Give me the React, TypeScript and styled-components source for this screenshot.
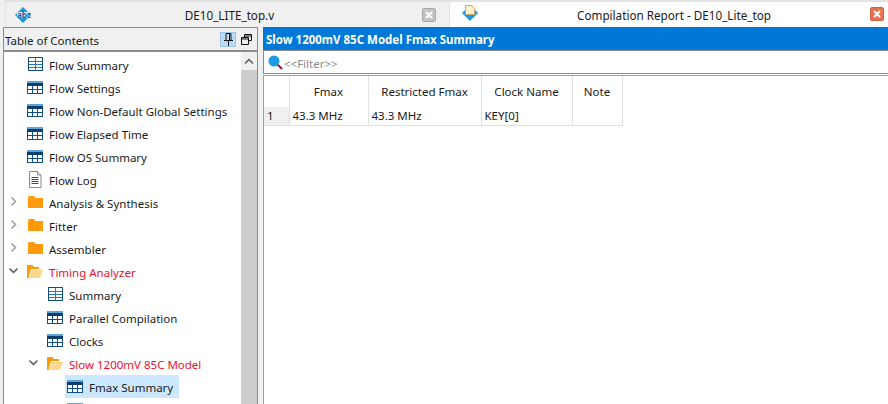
import React from 'react';
import styled, { createGlobalStyle } from 'styled-components';

const GlobalStyle = createGlobalStyle`
  html, body {
    margin: 0;
    padding: 0;
    width: 888px;
    height: 404px;
    overflow: hidden;
    background: #f0f0f0;
  }
  * { box-sizing: border-box; }
`;

type Kind = 'grid' | 'table' | 'log' | 'folder' | 'open';

interface TreeItem {
  label: string;
  kind: Kind;
  level: number;
  arrow?: 'right' | 'down';
  red?: boolean;
  selected?: boolean;
}

const treeItems: TreeItem[] = [
  { label: 'Flow Summary', kind: 'grid', level: 0 },
  { label: 'Flow Settings', kind: 'table', level: 0 },
  { label: 'Flow Non-Default Global Settings', kind: 'table', level: 0 },
  { label: 'Flow Elapsed Time', kind: 'table', level: 0 },
  { label: 'Flow OS Summary', kind: 'table', level: 0 },
  { label: 'Flow Log', kind: 'log', level: 0 },
  { label: 'Analysis & Synthesis', kind: 'folder', level: 0, arrow: 'right' },
  { label: 'Fitter', kind: 'folder', level: 0, arrow: 'right' },
  { label: 'Assembler', kind: 'folder', level: 0, arrow: 'right' },
  { label: 'Timing Analyzer', kind: 'open', level: 0, arrow: 'down', red: true },
  { label: 'Summary', kind: 'grid', level: 1 },
  { label: 'Parallel Compilation', kind: 'table', level: 1 },
  { label: 'Clocks', kind: 'table', level: 1 },
  { label: 'Slow 1200mV 85C Model', kind: 'open', level: 1, arrow: 'down', red: true },
  { label: 'Fmax Summary', kind: 'table', level: 2, selected: true },
  // only the top of this row's icon is inside the window
  { label: '', kind: 'table', level: 2 },
];

function NodeIcon({ kind }: { kind: Kind }) {
  if (kind === 'grid') {
    return (
      <svg width="16" height="15" viewBox="0 0 16 15">
        <rect x="1.500" y="0.500" width="14" height="13" fill="#fff" stroke="#0f4f86" />
        <path d="M2 4.500h13M2 7.500h13M2 10.500h13M8.500 1v12" stroke="#2a78b8" fill="none" />
      </svg>
    );
  }
  if (kind === 'table') {
    return (
      <svg width="16" height="15" viewBox="0 0 16 15">
        <rect x="0.500" y="1.500" width="15" height="12" fill="#fff" stroke="#0f4f86" />
        <rect x="0" y="1" width="16" height="2" fill="#5fa4d6" />
        <rect x="0" y="3" width="16" height="3" fill="#0b3e6e" />
        <path d="M1 9.500h14M5.500 6v7M10.500 6v7" stroke="#0f4f86" fill="none" />
      </svg>
    );
  }
  if (kind === 'log') {
    return (
      <svg width="16" height="17" viewBox="0 0 16 17">
        <path d="M2.500.5h8l3.500 3.500v12.500H2.500z" fill="#fff" stroke="#8a8a8a" />
        <path d="M10.500.5V4H14" fill="#e6e6e6" stroke="#8a8a8a" />
        <path d="M4.500 6.500h7M4.500 8.500h7M4.500 10.500h7M4.500 12.500h7" stroke="#28507a" fill="none" />
      </svg>
    );
  }
  if (kind === 'folder') {
    return (
      <svg width="16" height="13" viewBox="0 0 16 13">
        <path d="M1 1.500Q1 0 2.500 0H7l1.500 2H16v10H1z" fill="#ff9a0a" />
      </svg>
    );
  }
  return (
    <svg width="16" height="13" viewBox="0 0 16 13">
      <path d="M0 0h5.500l1.500 2h5v2H4L1.500 13H0z" fill="#ff9a0a" />
      <path d="M4.500 5H16l-3 8H2z" fill="#fcd790" />
    </svg>
  );
}

function Chevron({ dir }: { dir: 'right' | 'down' }) {
  return (
    <svg width="9" height="9" viewBox="0 0 9 9">
      <path
        d={dir === 'right' ? 'M2.500 .5l4 4-4 4' : 'M.5 2.500l4 4 4-4'}
        fill="none"
        stroke={dir === 'right' ? '#9a9a9a' : '#555'}
        strokeWidth="1.500"
      />
    </svg>
  );
}

export default function App() {
  return (
    <Page>
      <GlobalStyle />
      <TabBar>
        <Tab>
          <TabIcon>
            <svg width="16" height="16" viewBox="0 0 16 16">
              <path d="M8 0l8 8-8 8-8-8z" fill="#1f97e0" />
              <rect x="2" y="5" width="12" height="6" rx="2.500" fill="#e4f3fc" />
            </svg>
            <AbcMark>abc</AbcMark>
          </TabIcon>
          <TabTitle>DE10_LITE_top.v</TabTitle>
          <CloseBox>
            <svg width="8" height="8" viewBox="0 0 8 8">
              <path d="M1 1l6 6M7 1L1 7" stroke="#fff" strokeWidth="2" />
            </svg>
          </CloseBox>
        </Tab>
        <Tab $active>
          <TabIcon $active>
            <svg width="16" height="16" viewBox="0 0 16 16">
              <path d="M0 8l8 8 8-8-3-3H3z" fill="#1f97e0" />
              <path d="M3.500.5h6l3 3v6h-9z" fill="#fdf0cc" stroke="#c9a96a" />
            </svg>
          </TabIcon>
          <TabTitle>Compilation Report - DE10_Lite_top</TabTitle>
          <CloseBox $danger>
            <svg width="8" height="8" viewBox="0 0 8 8">
              <path d="M1 1l6 6M7 1L1 7" stroke="#fff" strokeWidth="2" />
            </svg>
          </CloseBox>
        </Tab>
      </TabBar>

      <Workspace>
        <Sidebar>
          <SidebarHeader>
            <SidebarTitle>Table of Contents</SidebarTitle>
            <PinButton $on>
              <svg width="11" height="13" viewBox="0 0 11 13">
                <path d="M3 .5h5v7H3zM1 7.500h9M5.500 8v5M6.500 1v6" fill="none" stroke="#111" />
              </svg>
            </PinButton>
            <PinButton>
              <svg width="11" height="11" viewBox="0 0 11 11">
                <path d="M3.500 3V.5h7v6H8M3.500 2h7" fill="none" stroke="#111" />
                <path d="M.5 3.500h7v7h-7zM.5 5h7" fill="none" stroke="#111" />
              </svg>
            </PinButton>
          </SidebarHeader>
          <SidebarBody>
            <Tree>
              {treeItems.map((item, i) => (
                <TreeRow key={i} $level={item.level}>
                  <ArrowSlot>{item.arrow && <Chevron dir={item.arrow} />}</ArrowSlot>
                  <TreeNode $selected={item.selected}>
                    <IconSlot>
                      <NodeIcon kind={item.kind} />
                    </IconSlot>
                    {item.label && <NodeLabel $red={item.red}>{item.label}</NodeLabel>}
                  </TreeNode>
                </TreeRow>
              ))}
            </Tree>
            <ScrollTrack>
              <ScrollButton>
                <svg width="10" height="7" viewBox="0 0 10 7">
                  <path d="M1 5.500l4-4 4 4" fill="none" stroke="#555" strokeWidth="1.500" />
                </svg>
              </ScrollButton>
              <ScrollThumb />
            </ScrollTrack>
          </SidebarBody>
        </Sidebar>

        <Splitter />

        <Report>
          <ReportTitle>Slow 1200mV 85C Model Fmax Summary</ReportTitle>
          <FilterBar>
            <svg width="15" height="15" viewBox="0 0 15 15">
              <path d="M9 9l5 5" stroke="#8e2030" strokeWidth="2" />
              <circle cx="6" cy="6" r="5.500" fill="#1e9be8" />
            </svg>
            <FilterText>&lt;&lt;Filter&gt;&gt;</FilterText>
          </FilterBar>
          <TableArea>
            <SummaryTable>
              <colgroup>
                <col width={25} />
                <col width={79} />
                <col width={113} />
                <col width={91} />
                <col width={50} />
              </colgroup>
              <thead>
                <tr>
                  <HeadCell />
                  <HeadCell>Fmax</HeadCell>
                  <HeadCell>Restricted Fmax</HeadCell>
                  <HeadCell>Clock Name</HeadCell>
                  <HeadCell>Note</HeadCell>
                </tr>
              </thead>
              <tbody>
                <tr>
                  <RowHead>1</RowHead>
                  <DataCell>43.3 MHz</DataCell>
                  <DataCell>43.3 MHz</DataCell>
                  <DataCell>KEY[0]</DataCell>
                  <DataCell />
                </tr>
              </tbody>
            </SummaryTable>
          </TableArea>
        </Report>
      </Workspace>
    </Page>
  );
}

const Page = styled.div`
  width: 888px;
  height: 404px;
  display: flex;
  flex-direction: column;
  overflow: hidden;
  background: #f0f0f0;
  font-family: 'Noto Sans', 'Open Sans', sans-serif;
  font-size: 11.500px;
  color: #1a1a1a;
`;

const TabBar = styled.div`
  height: 27px;
  flex: none;
  display: flex;
  padding-left: 5px;
  background: #f0f0f0;
`;

const Tab = styled.div<{ $active?: boolean }>`
  flex: ${(p) => (p.$active ? '1' : '0 0 444px')};
  position: relative;
  display: flex;
  align-items: center;
  justify-content: center;
  padding-left: ${(p) => (p.$active ? '10px' : '4px')};
  background: ${(p) => (p.$active ? '#fff' : '#f0f0f0')};
  border-top: 2px solid #e3e3e3;
  border-left: 1px solid #e3e3e3;
`;

const TabIcon = styled.span<{ $active?: boolean }>`
  position: absolute;
  left: ${(p) => (p.$active ? '12px' : '9px')};
  top: ${(p) => (p.$active ? '3px' : '5px')};
  display: flex;
`;

const AbcMark = styled.span`
  position: absolute;
  left: 2px;
  top: 1px;
  width: 12px;
  text-align: center;
  font-size: 8px;
  line-height: 13px;
  font-weight: 700;
  color: #0f5f98;
`;

const TabTitle = styled.span`
  font-size: 11.700px;
  line-height: 16px;
  padding-top: 1px;
  white-space: nowrap;
`;

const CloseBox = styled.span<{ $danger?: boolean }>`
  position: absolute;
  right: ${(p) => (p.$danger ? '4px' : '13px')};
  top: ${(p) => (p.$danger ? '5px' : '6px')};
  width: 14px;
  height: 14px;
  display: flex;
  align-items: center;
  justify-content: center;
  border-radius: 2px;
  background: ${(p) => (p.$danger ? '#e8714f' : '#c4c4c4')};
  border: 1px solid ${(p) => (p.$danger ? '#d0603f' : '#a8a8a8')};
`;

const Workspace = styled.div`
  flex: 1;
  min-height: 0;
  display: flex;
  padding-left: 3px;
`;

const Sidebar = styled.div`
  width: 255px;
  flex: none;
  display: flex;
  flex-direction: column;
  border-top: 1px solid #8c8c8c;
  border-left: 1px solid #8c8c8c;
  border-right: 1px solid #8c8c8c;
`;

const SidebarHeader = styled.div`
  height: 24px;
  flex: none;
  display: flex;
  align-items: center;
  gap: 2px;
  padding: 0 3px 0 1px;
  background: #f0f0f0;
  border-bottom: 2px solid #8c8c8c;
`;

const SidebarTitle = styled.span`
  flex: 1;
  padding-top: 3px;
`;

const PinButton = styled.span<{ $on?: boolean }>`
  width: 16px;
  height: 15px;
  display: flex;
  align-items: center;
  justify-content: center;
  background: ${(p) => (p.$on ? '#bcdcf5' : 'transparent')};
  border: 1px solid ${(p) => (p.$on ? '#9cc6e8' : 'transparent')};
`;

const SidebarBody = styled.div`
  flex: 1;
  min-height: 0;
  display: flex;
  background: #fff;
`;

const Tree = styled.div`
  flex: 1;
  min-width: 0;
  padding-top: 1px;
  overflow: hidden;
`;

const TreeRow = styled.div<{ $level: number }>`
  height: 23px;
  display: flex;
  align-items: center;
  padding-left: ${(p) => 3 + p.$level * 20}px;
`;

const ArrowSlot = styled.span`
  width: 18px;
  flex: none;
  display: flex;
  padding-left: 2px;
  margin-top: -3px;
`;

const TreeNode = styled.span<{ $selected?: boolean }>`
  height: 23px;
  display: flex;
  align-items: center;
  padding: 0 6px 0 2px;
  background: ${(p) => (p.$selected ? '#cce8ff' : 'transparent')};
`;

const IconSlot = styled.span`
  width: 22px;
  flex: none;
  display: flex;
  margin-top: -1px;
`;

const NodeLabel = styled.span<{ $red?: boolean }>`
  white-space: nowrap;
  line-height: 16px;
  padding-top: 2px;
  color: ${(p) => (p.$red ? '#e8112d' : '#1a1a1a')};
`;

const ScrollTrack = styled.div`
  width: 16px;
  flex: none;
  display: flex;
  flex-direction: column;
  background: #f0f0f0;
`;

const ScrollButton = styled.div`
  height: 18px;
  flex: none;
  display: flex;
  align-items: center;
  justify-content: center;
`;

const ScrollThumb = styled.div`
  flex: 1;
  background: #cdcdcd;
`;

const Splitter = styled.div`
  width: 5px;
  flex: none;
  background: #f0f0f0;
`;

const Report = styled.div`
  flex: 1;
  min-width: 0;
  display: flex;
  flex-direction: column;
  background: #fff;
`;

const ReportTitle = styled.div`
  height: 23px;
  flex: none;
  padding: 5px 0 0 3px;
  background: #0078d7;
  color: #fff;
  font-weight: 700;
  line-height: 16px;
`;

const FilterBar = styled.div`
  height: 24px;
  flex: none;
  display: flex;
  align-items: center;
  gap: 1px;
  padding: 1px 0 0 4px;
  border-top: 1px solid #8c8c8c;
  border-left: 1px solid #8c8c8c;
  border-bottom: 1px solid #8c8c8c;
`;

const FilterText = styled.span`
  color: #8a8a8a;
  padding-top: 1px;
`;

const TableArea = styled.div`
  flex: 1;
  border-top: 1px solid #a0a0a0;
  border-left: 1px solid #a0a0a0;
  margin-top: 1px;
`;

const SummaryTable = styled.table`
  border-collapse: collapse;
  table-layout: fixed;
  width: 358px;
`;

const HeadCell = styled.th`
  height: 31px;
  padding: 0;
  font-weight: 400;
  text-align: center;
  border-right: 1px solid #e0e0e0;
`;

const RowHead = styled.td`
  height: 18px;
  padding: 0 0 0 3px;
  background: #f0f0f0;
  border-bottom: 1px solid #e0e0e0;
  border-right: 1px solid #e0e0e0;
`;

const DataCell = styled.td`
  height: 18px;
  padding: 0 0 0 3px;
  border-bottom: 1px solid #e0e0e0;
  border-right: 1px solid #e0e0e0;
`;
